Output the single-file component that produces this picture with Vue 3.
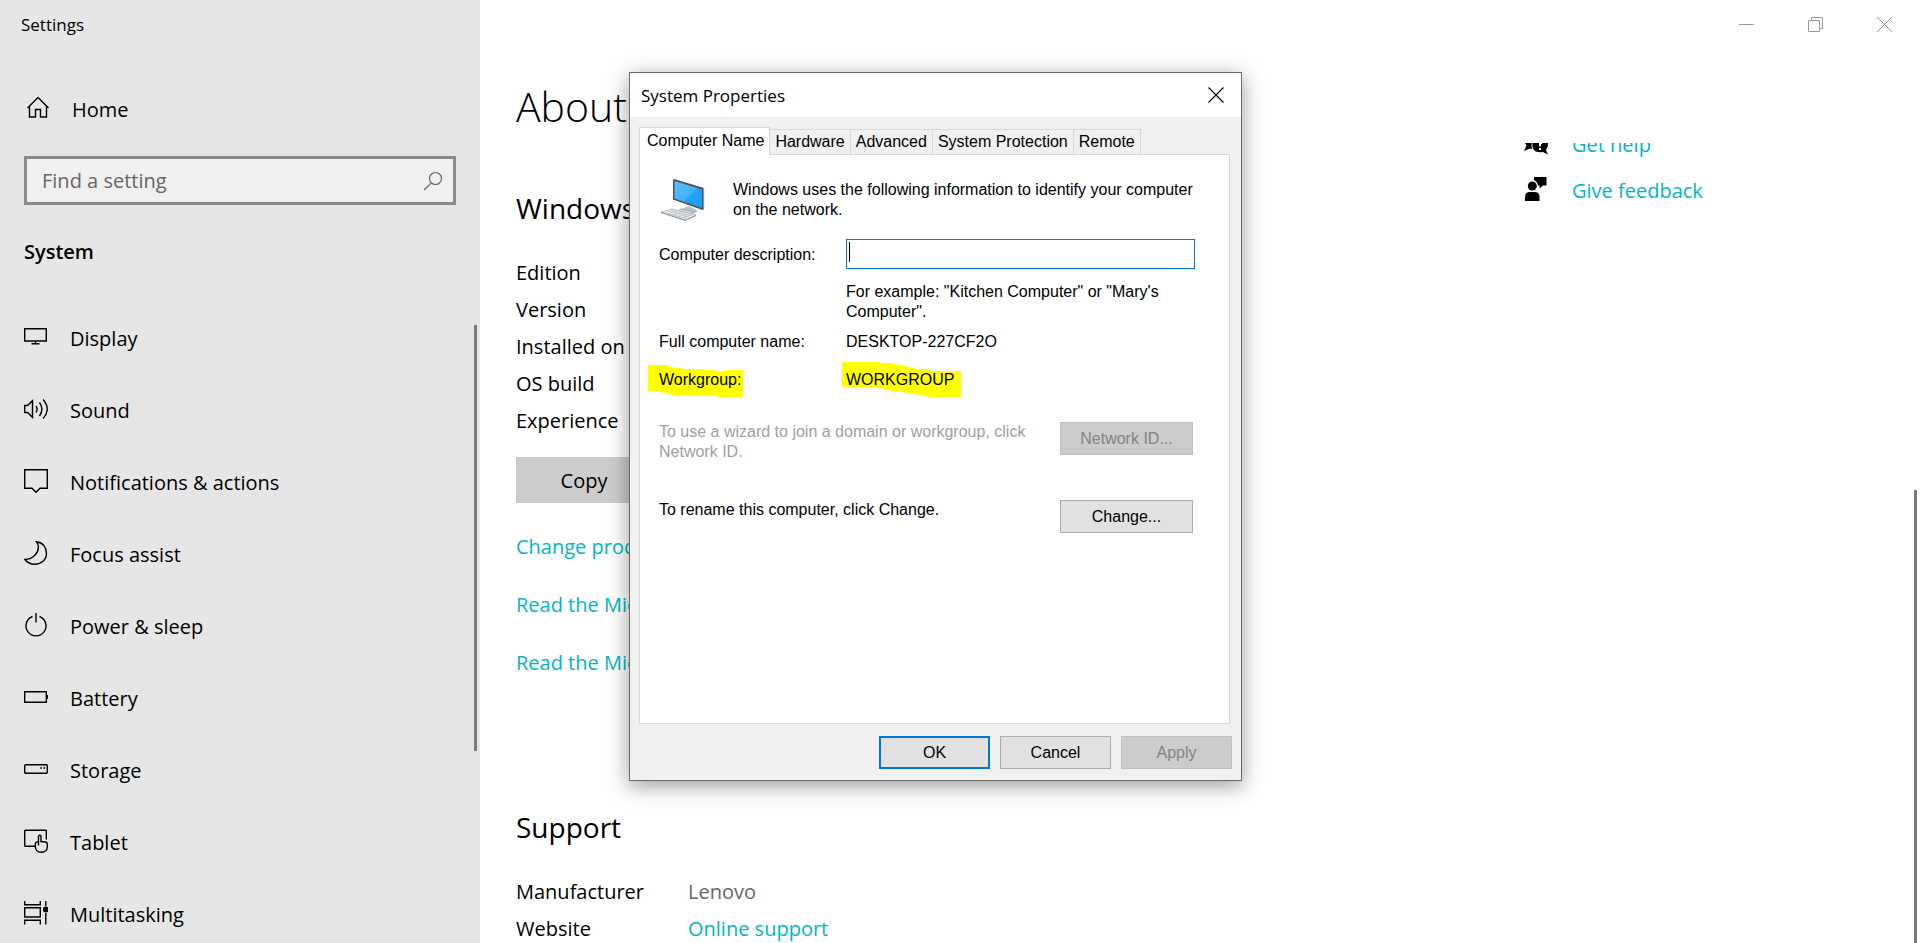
<script setup>
import { ref } from 'vue'

const search = ref('')
const description = ref('')

const navItems = [
  { id: 'display', label: 'Display' },
  { id: 'sound', label: 'Sound' },
  { id: 'notifications', label: 'Notifications & actions' },
  { id: 'focus', label: 'Focus assist' },
  { id: 'power', label: 'Power & sleep' },
  { id: 'battery', label: 'Battery' },
  { id: 'storage', label: 'Storage' },
  { id: 'tablet', label: 'Tablet' },
  { id: 'multitasking', label: 'Multitasking' },
]

const specs = ['Edition', 'Version', 'Installed on', 'OS build', 'Experience']

const links = [
  'Change product key',
  'Read the Microsoft Services Agreement',
  'Read the Microsoft Software License Terms',
]

const tabs = ['Computer Name', 'Hardware', 'Advanced', 'System Protection', 'Remote']
const activeTab = ref('Computer Name')
</script>

<template>
  <div class="window">
    <aside class="sidebar">
      <header class="app-title">Settings</header>
      <a class="home" href="#home">
        <svg class="icon" viewBox="0 0 24 24" aria-hidden="true">
          <path d="M1.5 12 12 1.500 22.500 12M3.500 10.500V21H9.500V13.500H14.500V21H20.500V10.500" />
        </svg>
        Home
      </a>
      <div class="search">
        <input v-model="search" type="text" placeholder="Find a setting" aria-label="Find a setting" />
        <svg class="search-icon" viewBox="0 0 20 20" aria-hidden="true">
          <circle cx="12.500" cy="7.500" r="6" />
          <path d="M8.200 11.800 1 19" />
        </svg>
      </div>
      <h2 class="group">System</h2>
      <nav class="nav">
        <a v-for="item in navItems" :key="item.id" class="nav-item" :href="'#' + item.id">
          <svg class="icon" viewBox="0 0 24 24" aria-hidden="true">
            <g v-if="item.id === 'display'">
              <path d="M.7 3.700H22.300V16H.7ZM11.500 16V18.500M7.500 18.700H15.500" />
            </g>
            <g v-else-if="item.id === 'sound'">
              <path d="M.7 8.500H3.500L8.500 3.700V20.300L3.500 15.500H.7Z" />
              <path d="M12 9Q14.300 12 12 15.500M15.500 5.500Q20.300 12 15.500 19M19 2.500Q27.500 12 19 21.500" />
            </g>
            <g v-else-if="item.id === 'notifications'">
              <path d="M.7.7H23.300V19.300H16L12 23.300 8 19.300H.7Z" />
            </g>
            <g v-else-if="item.id === 'focus'">
              <path d="M12.500.8C19 1.500 22.500 6.500 22.500 12.500C22.500 19 17 23.300 11 23.300C6.500 23.300 3 21.500 1 18.500C9 18 15 12 14.300 5Q14 2.500 12.500.8Z" />
            </g>
            <g v-else-if="item.id === 'power'">
              <path d="M12 0V9.500M8.500 3.500A10 10 0 1 0 15.500 3.500" />
            </g>
            <g v-else-if="item.id === 'battery'">
              <path d="M.7 6.700H22.300V17.300H.7ZM23.300 10V14" />
            </g>
            <g v-else-if="item.id === 'storage'">
              <rect x=".7" y="7.700" width="22.600" height="8.600" rx="1" />
              <path d="M16.300 11H18M19.500 11H21.200" />
            </g>
            <g v-else-if="item.id === 'tablet'">
              <path d="M11 17.300H1.500Q.7 17.300.7 16.500V2Q.7 1.300 1.500 1.300H21.500Q22.300 1.300 22.300 2V10.500" />
              <path d="M14.500 16.500V7.500Q14.500 6.200 15.800 6.200T17 7.500V12.500L21.500 13Q23.300 13.300 23.300 15V17.500Q23.300 23.300 17.300 23.300 11.500 23.300 11.300 17.500V14.500Q11.500 13 14.500 12.500" />
            </g>
            <g v-else>
              <path d="M.7 0V3.700H16.300V0M.7 6.700H16.300V16H.7ZM.7 23.500V19.300H16.300V23.500M21.800 0V5M21.800 12V23.500" />
              <circle class="solid" cx="21.800" cy="8.500" r="2.200" />
            </g>
          </svg>
          {{ item.label }}
        </a>
      </nav>
      <div class="scrollbar nav-scroll"></div>
    </aside>

    <main class="main">
      <div class="window-controls">
        <button type="button" aria-label="Minimize">
          <svg viewBox="0 0 15 15"><path d="M0 7.500H15" /></svg>
        </button>
        <button type="button" aria-label="Restore">
          <svg viewBox="0 0 15 15"><path d="M.5 3.500H11.500V14.500H.5ZM3.500 3.500V.5H14.500V11.500H11.500" /></svg>
        </button>
        <button type="button" aria-label="Close">
          <svg viewBox="0 0 15 15"><path d="M0 0 15 15M15 0 0 15" /></svg>
        </button>
      </div>
      <h1>About</h1>
      <div class="body">
        <section class="content">
          <h2>Windows specifications</h2>
          <ul class="specs">
            <li v-for="spec in specs" :key="spec">{{ spec }}</li>
          </ul>
          <button class="copy" type="button">Copy</button>
          <div class="links">
            <a v-for="link in links" :key="link" href="#about">{{ link }}</a>
          </div>
          <h2 class="support-title">Support</h2>
          <dl class="support">
            <dt>Manufacturer</dt>
            <dd>Lenovo</dd>
            <dt>Website</dt>
            <dd><a href="#support">Online support</a></dd>
          </dl>
        </section>
        <aside class="help">
          <a href="#help">
            <svg class="help-icon" viewBox="0 0 24 24" aria-hidden="true">
              <path d="M9 1C4 1 .5 4.500.5 9Q.5 12 2.500 14.500L0 20 6 17.500Q7 18 8 18C6 11 10 5 16 4Q13 1 9 1Z" />
              <path fill-rule="evenodd" d="M16 5.500C21 5.500 24 9 24 13.500Q24 16.500 22 19L24 23.500 19 21Q12 22.500 9 17.500C6.500 11 11 5.500 16 5.500ZM15 17V19H17V17ZM15 12V15.500H16.800V13.500Q19 12.500 19 10.500L17 10.500Q17 11.500 15 12Z" />
            </svg>
            Get help
          </a>
          <a href="#feedback">
            <svg class="help-icon" viewBox="0 0 24 24" aria-hidden="true">
              <circle cx="8.300" cy="9" r="4.500" />
              <path d="M1 24V20Q1 15 6 15H10.500Q15.500 15 15.500 20V24ZM10 0H22.500V8.500H19L15.500 11.500V8.500H14Q13.500 4.500 10 3Z" />
            </svg>
            Give feedback
          </a>
        </aside>
      </div>
      <div class="scrollbar page-scroll"></div>
    </main>

    <section class="dialog" role="dialog" aria-label="System Properties">
      <header class="dialog-title">
        <span>System Properties</span>
        <button type="button" aria-label="Close dialog">
          <svg viewBox="0 0 16 16"><path d="M.5.5 15.500 15.500M15.500.5.5 15.500" /></svg>
        </button>
      </header>
      <div class="tabs" role="tablist">
        <button
          v-for="tab in tabs"
          :key="tab"
          type="button"
          role="tab"
          :aria-selected="tab === activeTab"
          :class="['tab', { active: tab === activeTab }]"
          @click="activeTab = tab"
        >{{ tab }}</button>
      </div>
      <div class="panel" role="tabpanel">
        <div class="intro">
          <svg class="computer" viewBox="0 0 48 44" aria-hidden="true">
            <defs>
              <linearGradient id="screen" x1="0" y1="0" x2="1" y2="1">
                <stop offset="0" stop-color="#5cc0ff" />
                <stop offset=".55" stop-color="#3fb1fc" />
                <stop offset=".56" stop-color="#27a2f8" />
                <stop offset="1" stop-color="#1d9bf5" />
              </linearGradient>
            </defs>
            <path d="M22 30 30 27 39 32 34 35 22 31Z" fill="#b9c2cb" />
            <path d="M21 30 35 33 31 35 20 32Z" fill="#d7dce1" stroke="#8c959d" stroke-width=".6" />
            <path d="M15 0 45 9V30L43.500 31 14 20.500V1Z" fill="#4a5259" />
            <path d="M15.500 2 43 10.500V29L15.500 19.500Z" fill="url(#screen)" />
            <path d="M45 9V30" stroke="#d9dee2" stroke-width="1" />
            <path d="M2 33 13 30 37 36 26 41Z" fill="#eceef0" stroke="#a3aab1" stroke-width=".7" />
            <path d="M5 33.500 27 39.500M8 32 30 38M11 31 33 37M8 35 18 31.500M13 36.500 23 33M18 38 28 34.500M22 39.500 32 35.500" stroke="#b4bac0" stroke-width=".7" fill="none" />
            <path d="M2 33.500 26 41.500 37 36.500" stroke="#8e969e" stroke-width="1" fill="none" />
          </svg>
          <p>Windows uses the following information to identify your computer on the network.</p>
        </div>
        <div class="form">
          <label for="description">Computer description:</label>
          <div class="field">
            <input id="description" v-model="description" type="text" />
            <span class="caret"></span>
          </div>
          <p class="example">For example: "Kitchen Computer" or "Mary's Computer".</p>
          <span>Full computer name:</span>
          <span>DESKTOP-227CF2O</span>
          <span class="marked">
            <svg class="marker label-marker" viewBox="0 0 95 32" aria-hidden="true">
              <path d="M0 0H20L22 2 32 3 36 4H54L58 5H66L74 7 78 5H95V30L93 32H70L68 31H55L40 30H24L18 28 12 27 11 26H0Z" />
            </svg>
            <span>Workgroup:</span>
          </span>
          <span class="marked">
            <svg class="marker value-marker" viewBox="0 0 119 35" aria-hidden="true">
              <path d="M0 0H37L39 1H48L52 2 60 3 67 5 75 7H84L90 9H119V35H88L80 33 70 32 62 30 50 29 42 27 35 25H0Z" />
            </svg>
            <span>WORKGROUP</span>
          </span>
        </div>
        <div class="action disabled-text">
          <p>To use a wizard to join a domain or workgroup, click Network ID.</p>
          <button class="btn" type="button" disabled>Network ID...</button>
        </div>
        <div class="action">
          <p>To rename this computer, click Change.</p>
          <button class="btn" type="button">Change...</button>
        </div>
      </div>
      <footer class="dialog-footer">
        <button class="btn primary" type="button">OK</button>
        <button class="btn" type="button">Cancel</button>
        <button class="btn" type="button" disabled>Apply</button>
      </footer>
    </section>
  </div>
</template>

<style>
body {
  margin: 0;
  background: #fff;
}
</style>

<style scoped>
.window {
  position: relative;
  display: flex;
  height: 100vh;
  overflow: hidden;
  background: #fff;
  color: #000;
  font-family: "Open Sans", "Noto Sans", sans-serif;
  font-size: 20px;
}

h1, h2, p, ul, dl, dd {
  margin: 0;
  padding: 0;
  font-weight: 400;
}

a {
  color: inherit;
  text-decoration: none;
}

button, input {
  box-sizing: border-box;
  margin: 0;
  padding: 0;
  border: 0;
  border-radius: 0;
  background: none;
  color: inherit;
  font: inherit;
}

.sidebar {
  position: relative;
  box-sizing: border-box;
  display: flex;
  flex: none;
  flex-direction: column;
  width: 480px;
  padding: 0 24px;
  overflow: hidden;
  background: #e6e6e6;
}

.sidebar > * {
  flex-shrink: 0;
}

.app-title {
  margin-left: -3px;
  font-size: 17px;
  line-height: 50px;
}

.icon {
  flex: none;
  width: 24px;
  height: 24px;
  margin-bottom: 2px;
  fill: none;
  stroke: #000;
  stroke-width: 1.4;
}

.icon .solid {
  fill: #000;
}

.home {
  display: flex;
  align-items: center;
  gap: 22px;
  height: 48px;
  margin-top: 35px;
  padding-left: 2px;
}

.search {
  display: flex;
  align-items: center;
  box-sizing: border-box;
  height: 49px;
  margin-top: 23px;
  padding: 0 10px 0 15px;
  border: 3px solid #8a8a8a;
  background: #f0f0f0;
}

.search input {
  flex: 1;
  min-width: 0;
  outline: 0;
  line-height: 28px;
}

.search input::placeholder {
  color: #666;
  opacity: 1;
}

.search-icon {
  width: 20px;
  height: 20px;
  fill: none;
  stroke: #666;
  stroke-width: 1.2;
}

.group {
  margin: 33px 0 36px;
  font-size: 20px;
  font-weight: 600;
  line-height: 28px;
}

.nav-item {
  display: flex;
  align-items: center;
  gap: 22px;
  height: 72px;
}

.scrollbar {
  position: absolute;
  width: 3px;
  background: #7a7a7a;
}

.nav-scroll {
  top: 325px;
  right: 3px;
  height: 426px;
}

.page-scroll {
  top: 490px;
  right: 3px;
  bottom: 0;
}

.main {
  display: flex;
  flex: 1;
  flex-direction: column;
  min-width: 0;
  padding-left: 36px;
}

.window-controls {
  display: flex;
  justify-content: flex-end;
  height: 48px;
  padding-right: 1px;
}

.window-controls button {
  display: grid;
  place-items: center;
  width: 69px;
}

.window-controls svg {
  width: 15px;
  height: 15px;
  fill: none;
  stroke: #999;
}

h1 {
  margin: 28px 0 7px;
  font-size: 41px;
  font-weight: 300;
  line-height: 60px;
}

.body {
  display: grid;
  grid-template-columns: 1fr 396px;
  flex: 1;
  min-height: 0;
  overflow: hidden;
}

.content {
  padding-top: 47px;
}

.content h2 {
  font-size: 28px;
  line-height: 36px;
}

.specs {
  margin-top: 28px;
  list-style: none;
}

.specs li, .support dt, .support dd {
  line-height: 37px;
}

.copy {
  width: 136px;
  height: 46px;
  margin-top: 18px;
  padding-top: 1px;
  background: #ccc;
}

.links {
  margin-top: 15px;
}

.links a {
  display: block;
  color: #00b7c3;
  line-height: 58px;
}

.content .support-title {
  margin-top: 117px;
}

.support {
  display: grid;
  grid-template-columns: 172px 1fr;
  margin-top: 28px;
}

.support dd {
  color: #666;
}

.support a {
  color: #00b7c3;
}

.help {
  margin-top: -22px;
}

.help a {
  display: flex;
  align-items: center;
  gap: 24px;
  height: 46px;
  color: #00b7c3;
}

.help-icon {
  width: 24px;
  height: 24px;
  margin-bottom: 2px;
  fill: #000;
}

.dialog {
  position: absolute;
  top: 72px;
  left: 629px;
  box-sizing: border-box;
  width: 613px;
  padding-bottom: 11px;
  border: 1px solid #6b6b6b;
  background: #f0f0f0;
  box-shadow: 0 5px 20px rgba(0, 0, 0, 0.4);
  font-family: "Liberation Sans", Arial, sans-serif;
  font-size: 16px;
  line-height: 20px;
}

.dialog-title {
  display: flex;
  align-items: center;
  justify-content: space-between;
  height: 44px;
  padding: 0 17px 0 11px;
  background: #fff;
  font-family: "Open Sans", "Noto Sans", sans-serif;
  font-size: 17px;
}

.dialog-title span {
  padding-top: 2px;
}

.dialog-title button {
  display: grid;
  place-items: center;
}

.dialog-title svg {
  width: 16px;
  height: 16px;
  fill: none;
  stroke: #000;
  stroke-width: 1.1;
}

.tabs {
  display: flex;
  align-items: flex-end;
  height: 27px;
  margin-top: 10px;
  padding-left: 9px;
}

.tab {
  height: 25px;
  padding: 0 5px;
  border: solid #d9d9d9;
  border-width: 1px 1px 0 0;
  white-space: nowrap;
}

.tab.active {
  z-index: 1;
  height: 28px;
  margin-bottom: -1px;
  padding: 0 5px 2px 7px;
  border-left-width: 1px;
  background: #fff;
}

.panel {
  box-sizing: border-box;
  min-height: 570px;
  margin: 0 11px 0 9px;
  padding: 24px 34px 24px 19px;
  border: 1px solid #d9d9d9;
  background: #fff;
}

.intro {
  display: grid;
  grid-template-columns: 48px 1fr;
  gap: 26px;
}

.intro p {
  padding-top: 1px;
}

.computer {
  width: 48px;
  height: 44px;
}

.form {
  display: grid;
  grid-template-columns: 187px 1fr;
  align-items: center;
  margin-top: 16px;
}

.form label {
  padding-top: 2px;
}

.field {
  position: relative;
  height: 30px;
}

.field input {
  width: 100%;
  height: 30px;
  padding: 0 4px;
  border: 1px solid #0078d7;
  outline: 0;
  background: #fff;
}

.caret {
  position: absolute;
  top: 3px;
  left: 3px;
  width: 1px;
  height: 20px;
  background: #000;
}

.example {
  grid-column: 2;
  margin: 13px 0 10px;
}

.marked {
  position: relative;
  margin-top: 18px;
}

.marked > span {
  position: relative;
}

.marker {
  position: absolute;
  fill: #ff0;
}

.label-marker {
  top: -5px;
  left: -11px;
  width: 95px;
  height: 32px;
}

.value-marker {
  top: -8px;
  left: -4px;
  width: 119px;
  height: 35px;
}

.action {
  display: grid;
  grid-template-columns: 1fr 133px;
  gap: 32px;
  min-height: 40px;
  margin-top: 32px;
  margin-right: 2px;
}

.action + .action {
  margin-top: 38px;
}

.disabled-text p {
  color: #a0a0a0;
}

.btn {
  height: 33px;
  border: 1px solid #adadad;
  background: #e1e1e1;
}

.btn:disabled {
  border-color: #bfbfbf;
  background: #ccc;
  color: #838383;
}

.btn.primary {
  border: 2px solid #0078d7;
}

.dialog-footer {
  display: flex;
  justify-content: flex-end;
  gap: 10px;
  margin-top: 12px;
  padding-right: 9px;
}

.dialog-footer .btn {
  width: 111px;
}
</style>
